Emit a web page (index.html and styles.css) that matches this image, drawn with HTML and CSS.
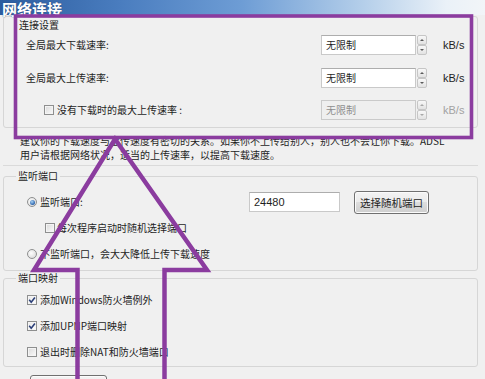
FILE: index.html
```html
<!DOCTYPE html>
<html lang="zh-CN">
<head>
<meta charset="utf-8">
<title>网络连接</title>
<link rel="stylesheet" href="styles.css">
</head>
<body>
<div class="win">
  <div class="titlebar">网络连接</div>
  <div class="content">
    <section class="box-conn">
      <div class="box-title">连接设置</div>
      <div class="rate-row">
        <span class="lbl">全局最大下载速率:</span>
        <span class="input">无限制</span>
        <span class="spin"><i class="up"></i><i class="down"></i></span>
        <span class="unit">kB/s</span>
      </div>
      <div class="rate-row">
        <span class="lbl">全局最大上传速率:</span>
        <span class="input">无限制</span>
        <span class="spin"><i class="up"></i><i class="down"></i></span>
        <span class="unit">kB/s</span>
      </div>
      <div class="rate-row disabled">
        <span class="lbl lbl-check"><span class="cb"></span>没有下载时的最大上传速率 :</span>
        <span class="input">无限制</span>
        <span class="spin"><i class="up"></i><i class="down"></i></span>
        <span class="unit">kB/s</span>
      </div>
    </section>

    <p class="desc">建议你的下载速度与上传速度有密切的关系。如果你不上传给别人，别人也不会让你下载。ADSL<br>用户请根据网络状况，适当的上传速率，以提高下载速度。</p>

    <fieldset class="group group-listen">
      <legend>监听端口</legend>
      <div class="port-row">
        <span class="opt opt-radio"><span class="radio checked"></span>监听端口:</span>
        <span class="input port-input">24480</span>
        <span class="btn btn-random">选择随机端口</span>
      </div>
      <div class="opt opt-sub"><span class="cb"></span>每次程序启动时随机选择端口</div>
      <div class="opt opt-radio opt-last"><span class="radio"></span>不监听端口，会大大降低上传下载速度</div>
    </fieldset>

    <fieldset class="group group-map">
      <legend>端口映射</legend>
      <div class="opt opt-map"><span class="cb checked"><svg viewBox="0 0 10 10" width="10" height="10"><path d="M2.2 4.8 L4.2 7.2 L7.9 2.4" fill="none" stroke="#2b3f78" stroke-width="1.6"/></svg></span>添加Windows防火墙例外</div>
      <div class="opt opt-map"><span class="cb checked"><svg viewBox="0 0 10 10" width="10" height="10"><path d="M2.2 4.8 L4.2 7.2 L7.9 2.4" fill="none" stroke="#2b3f78" stroke-width="1.6"/></svg></span>添加UPNP端口映射</div>
      <div class="opt opt-map"><span class="cb"></span>退出时删除NAT和防火墙端口</div>
    </fieldset>

    <div class="bottom-row"><span class="btn btn-bottom"></span></div>
  </div>

  <svg class="annot" width="485" height="379" viewBox="0 0 485 379">
    <rect x="15.5" y="16" width="456" height="121.5" fill="none" stroke="#8b3c9f" stroke-width="3.6"/>
    <polyline points="77.5,390 77.5,270 34,270 115,139 207,270 164.5,270 164.5,390" fill="none" stroke="#8b3c9f" stroke-width="4.5" stroke-linejoin="miter"/>
  </svg>
</div>
</body>
</html>
```

FILE: styles.css
```css
* { box-sizing: border-box; }
html, body { margin: 0; padding: 0; }
body {
  background: #f0f0f0;
  font-family: "Noto Sans CJK SC", "Noto Sans", sans-serif;
  font-size: 10px;
  color: #1e1e1e;
}
.win {
  position: relative;
  width: 485px;
  height: 379px;
  overflow: hidden;
  background: #f0f0f0;
}
.titlebar {
  height: 15px;
  padding-left: 2px;
  background: linear-gradient(to right, #2c5d9f 0%, #4a7dbf 25%, #6e9dd5 50%, #b5cfea 75%, #eaf1f8 92%, #f2f5f8 100%);
  color: #fff;
  font-weight: bold;
  font-size: 15px;
  line-height: 18px;
  white-space: nowrap;
  text-shadow: 0 0 1px #1d3a66;
}
.content {
  padding: 0 7px 0 3px;
}

/* connection settings box */
.box-conn {
  margin-top: 1px;
  border: 1px solid #d6d6d6;
  border-radius: 3px;
  padding: 1px 0 7px;
}
.box-title {
  line-height: 14px;
  padding-left: 15px;
  margin-bottom: 3px;
}
.rate-row {
  display: grid;
  grid-template-columns: 317px 95px 11px 1fr;
  align-items: center;
  height: 20px;
}
.rate-row + .rate-row { margin-top: 12.5px; }
.lbl {
  padding-left: 22px;
  line-height: 14px;
  white-space: nowrap;
}
.lbl-check {
  display: flex;
  align-items: center;
  gap: 3px;
  padding-left: 40px;
}
.input {
  display: block;
  height: 20px;
  border: 1px solid #c9c9c9;
  border-top-color: #adadad;
  background: #fff;
  line-height: 18px;
  padding-left: 4px;
  white-space: nowrap;
}
.spin {
  display: flex;
  flex-direction: column;
  width: 10px;
  height: 20px;
  margin-left: 1px;
}
.spin i {
  flex: 1;
  display: flex;
  align-items: center;
  justify-content: center;
  border: 1px solid #c6c6c6;
  border-radius: 2px;
  background: linear-gradient(#f8f8f8, #e2e2e2);
}
.spin i::after {
  content: "";
  border-left: 2px solid transparent;
  border-right: 2px solid transparent;
}
.spin .up::after { border-bottom: 2px solid #5a5a5a; }
.spin .down::after { border-top: 2px solid #5a5a5a; }
.unit {
  padding-left: 16px;
  font-family: "Liberation Sans", sans-serif;
  font-size: 11px;
  line-height: 14px;
}
.disabled .input {
  background: #efefef;
  color: #8e8e8e;
  border-color: #cacaca;
}
.disabled .spin .up::after { border-bottom-color: #a8a8a8; }
.disabled .spin .down::after { border-top-color: #a8a8a8; }
.disabled .unit { color: #a2a2a2; }

/* description */
.desc {
  margin: 6px 0 0;
  padding: 0 0 3px 17px;
  line-height: 14px;
  white-space: nowrap;
  border-bottom: 1px solid #dadada;
}

/* group boxes */
.group {
  margin: 0;
  padding: 0;
  min-width: 0;
  border: 1px solid #d6d6d6;
  border-radius: 3px;
}
.group legend {
  margin-left: 12px;
  padding: 0 2px;
  line-height: 14px;
}
.group-listen { margin-top: 3px; padding-bottom: 9px; }
.group-map { padding-bottom: 7px; }

.opt {
  display: flex;
  align-items: center;
  line-height: 14px;
  height: 14px;
  white-space: nowrap;
}
.opt-radio { gap: 3px; padding-left: 23px; }
.opt-sub { gap: 2px; padding-left: 41px; margin-top: 7.5px; }
.opt-last { margin-top: 12px; }
.opt-map { gap: 3px; padding-left: 23px; margin-top: 12px; }
.opt-map:first-of-type { margin-top: 8px; }

.port-row {
  display: flex;
  align-items: center;
  height: 23px;
  margin-top: 7.5px;
}
.port-row .opt-radio { width: 245px; }
.port-input {
  width: 91px;
  font-family: "Liberation Sans", sans-serif;
  font-size: 11px;
  line-height: 18px;
}

/* controls */
.cb {
  flex: none;
  display: block;
  width: 10px;
  height: 10px;
  border: 1px solid #8e8f8f;
  background: linear-gradient(135deg, #d9d9d9, #fbfbfb);
  box-shadow: inset 0 0 0 1px #f4f4f4;
}
.cb svg { display: block; margin: -1px; }
.cb.checked { background: linear-gradient(135deg, #e8e8e8, #ffffff); }
.radio {
  flex: none;
  display: flex;
  align-items: center;
  justify-content: center;
  width: 10px;
  height: 10px;
  border: 1px solid #8e8f8f;
  border-radius: 50%;
  background: radial-gradient(circle at 40% 40%, #fdfdfd, #d4d4d4);
}
.radio.checked::after {
  content: "";
  width: 5px;
  height: 5px;
  border-radius: 50%;
  background: radial-gradient(circle at 40% 35%, #a9d3f5, #2a63ad 70%, #1b3f7a);
}
.btn {
  display: flex;
  align-items: center;
  justify-content: center;
  border: 1px solid #707070;
  border-radius: 3px;
  background: linear-gradient(#f3f3f3 0%, #ebebeb 49%, #dddddd 50%, #cfcfcf 100%);
  box-shadow: inset 0 0 0 1px #fbfbfb;
  font-size: 10.5px;
  white-space: nowrap;
}
.btn-random {
  width: 75px;
  height: 23px;
  margin-left: 14px;
}
.bottom-row {
  margin-top: 8px;
  padding-left: 27px;
}
.btn-bottom {
  width: 77px;
  height: 24px;
}

/* annotation overlay */
.annot {
  position: absolute;
  left: 0;
  top: 0;
  pointer-events: none;
}
```
